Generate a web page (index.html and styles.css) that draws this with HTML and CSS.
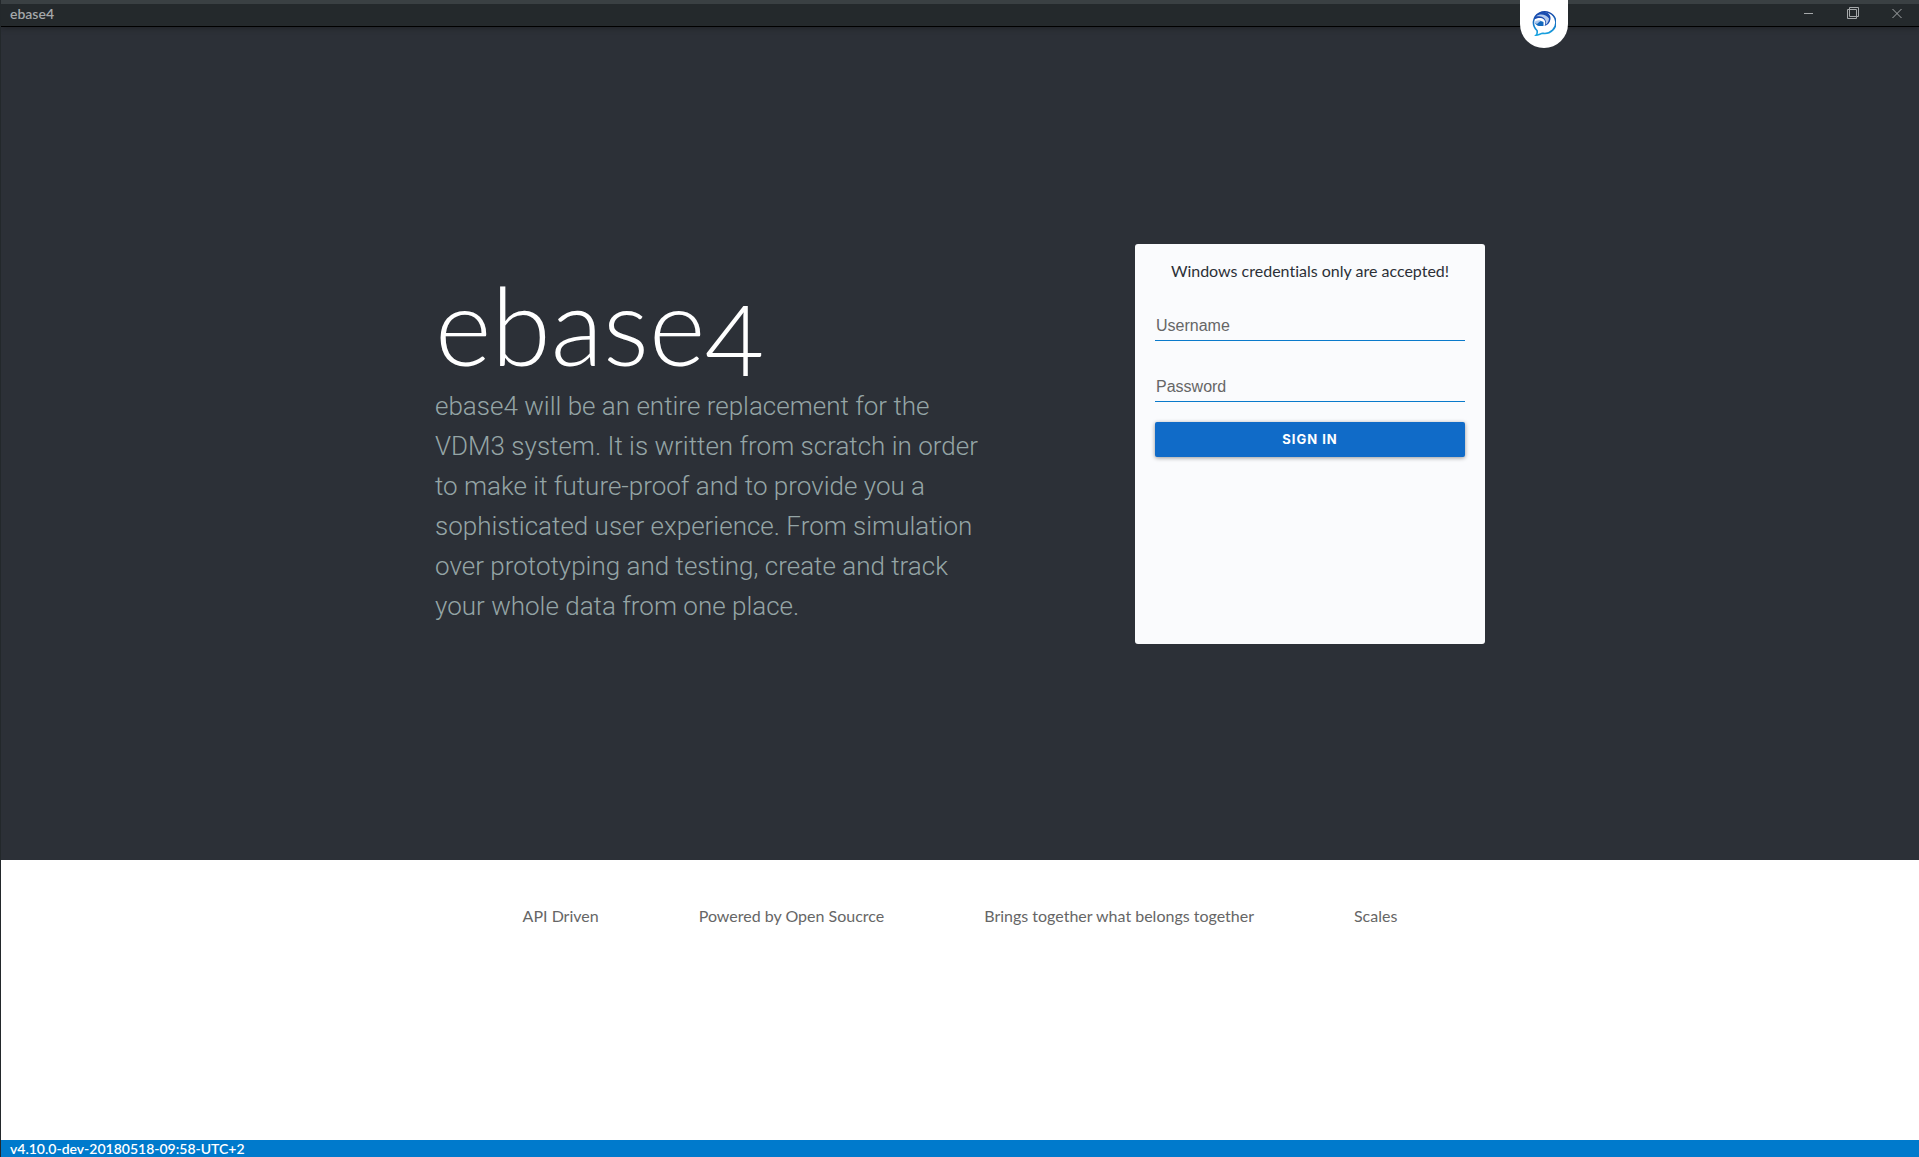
FILE: index.html
```html
<!DOCTYPE html>
<html lang="en">
<head>
  <meta charset="utf-8">
  <title>ebase4</title>
  <link rel="stylesheet" href="styles.css">
</head>
<body>
  <header class="titlebar">
    <span class="titlebar-name">ebase4</span>
    <div class="window-controls">
      <button class="window-button" type="button" aria-label="Minimize">
        <svg width="12" height="12" viewBox="0 0 12 12"><path d="M1 6.5h9"/></svg>
      </button>
      <button class="window-button" type="button" aria-label="Restore">
        <svg width="12" height="12" viewBox="0 0 12 12"><path d="M.5 2.5h9v9h-9zM2.500 .5h9v9h-9z"/></svg>
      </button>
      <button class="window-button" type="button" aria-label="Close">
        <svg width="12" height="12" viewBox="0 0 12 12"><path d="M1.500 2l9 9M10.500 2l-9 9"/></svg>
      </button>
    </div>
    <div class="chat-tab">
      <svg width="24" height="26" viewBox="0 0 24 26">
        <defs>
          <linearGradient id="ring" x1="0" y1="0" x2="0" y2="1">
            <stop offset="0" stop-color="#1443a6"/>
            <stop offset="1" stop-color="#18a6e2"/>
          </linearGradient>
        </defs>
        <path d="M5 20.500A11.200 10.800 0 1 1 11 23.300C8.500 23.700 6.500 25 4 25.200C5.200 24 5.500 22.500 5 20.500Z" fill="#fff" stroke="url(#ring)" stroke-width="1.600"/>
        <path d="M1.800 9.500C3 4.500 7.500 1.800 12.500 2C16.500 2.500 19 5.500 18.500 9C18 12.500 16 15 12.500 16C14.500 12.500 13 8.500 8.500 8C6 7.800 4 8.500 1.800 9.500Z" fill="#1a4db0"/>
        <path d="M4 6.500C8 3 14 4.500 17 8.500C17 11 15.500 13.500 13.800 14.800C15 11 12.500 7 8.500 6.500C6.500 6.200 5 6.300 4 6.500Z" fill="#b4caec"/>
        <path d="M3 13C5 10.500 9 10.300 11.500 12V16H7C5.200 15.800 4 14.800 3 13Z" fill="#1268bd"/>
        <path d="M2 12.500C4 10.300 6.500 9.900 9 10.500L5 14Z" fill="#a9c6ec"/>
      </svg>
    </div>
  </header>
  <main class="page">
    <section class="hero">
      <div class="hero-content">
        <div class="intro">
          <h1 class="intro-title">ebase4</h1>
          <p class="intro-text">ebase4 will be an entire replacement for the VDM3 system. It is written from scratch in order to make it future-proof and to provide you a sophisticated user experience. From simulation over prototyping and testing, create and track your whole data from one place.</p>
        </div>
        <form class="login">
          <p class="login-note">Windows credentials only are accepted!</p>
          <input class="login-field" type="text" placeholder="Username" aria-label="Username">
          <input class="login-field" type="password" placeholder="Password" aria-label="Password">
          <button class="login-submit" type="button">SIGN IN</button>
        </form>
      </div>
    </section>
    <ul class="features">
      <li>API Driven</li>
      <li>Powered by Open Soucrce</li>
      <li>Brings together what belongs together</li>
      <li>Scales</li>
    </ul>
  </main>
  <footer class="statusbar">v4.10.0-dev-20180518-09:58-UTC+2</footer>
</body>
</html>
```

FILE: styles.css
```css
* {
  box-sizing: border-box;
}

body {
  margin: 0;
  min-height: 100vh;
  display: flex;
  flex-direction: column;
  border-left: 1px solid #23282b;
  background: #fff;
  font-family: Lato, sans-serif;
  font-size: 16px;
  font-variant-ligatures: none;
}

.titlebar {
  position: relative;
  z-index: 1;
  display: flex;
  align-items: center;
  justify-content: space-between;
  height: 27px;
  padding: 0 0 2px 9px;
  border-top: 4px solid #3a4043;
  border-bottom: 1px solid #000;
  background: #24292c;
  box-shadow: 0 1px 6px rgba(0, 0, 0, 0.3);
}

.titlebar-name {
  color: #a5a8aa;
  font-size: 14px;
  font-weight: 600;
  line-height: 20px;
}

.window-controls {
  display: flex;
  align-self: stretch;
}

.window-button {
  display: flex;
  align-items: center;
  justify-content: center;
  width: 44px;
  padding: 0 0 2px;
  border: 0;
  background: none;
}

.window-button svg {
  fill: none;
  stroke: #a5a8aa;
  stroke-width: 1;
}

.chat-tab {
  position: absolute;
  top: -4px;
  right: 351px;
  display: flex;
  justify-content: center;
  width: 48px;
  height: 48px;
  padding-top: 10px;
  border-radius: 0 0 24px 24px;
  background: #fff;
}

.page {
  flex: 1;
  display: flex;
  flex-direction: column;
}

.hero {
  min-height: 72vh;
  display: flex;
  align-items: center;
  justify-content: center;
  background: #2c3037;
}

.hero-content {
  display: flex;
  align-items: center;
  justify-content: space-between;
  width: 1050px;
  max-width: 100%;
}

.intro {
  width: 550px;
}

.intro-title {
  margin: 0;
  color: #fff;
  font-size: 108px;
  font-weight: 300;
  line-height: 124px;
  font-feature-settings: "onum";
}

.intro-text {
  margin: 0;
  color: #95a5a6;
  font-family: Roboto, sans-serif;
  font-size: 26px;
  font-weight: 300;
  line-height: 40px;
}

.login {
  display: flex;
  flex-direction: column;
  width: 350px;
  min-height: 400px;
  padding: 15px 20px;
  border-radius: 3px;
  background: #fafbfd;
}

.login-note {
  margin: 0 0 33px;
  color: #2c3037;
  line-height: 24px;
  text-align: center;
}

.login-field {
  width: 100%;
  height: 25px;
  margin-bottom: 36px;
  padding: 0 1px 3px;
  border: 0;
  border-bottom: 1px solid #0a7acb;
  outline: 0;
  background: none;
  color: #2c3037;
  font-family: "Liberation Sans", sans-serif;
  font-size: 16px;
}

.login-field + .login-submit {
  margin-top: -16px;
}

.login-field::placeholder {
  color: #666;
}

.login-submit {
  height: 35px;
  border: 0;
  border-radius: 2px;
  background: #106bc8;
  box-shadow: 0 1px 4px rgba(0, 0, 0, 0.4);
  color: #fff;
  font-family: Inter, sans-serif;
  font-size: 13px;
  font-weight: 700;
  letter-spacing: 1px;
}

.features {
  flex: 1;
  display: flex;
  justify-content: center;
  gap: 100px;
  margin: 0;
  padding: 44px 0 0;
  color: #666;
  line-height: 24px;
  list-style: none;
}

.statusbar {
  padding-left: 9px;
  background: #007acc;
  color: #fff;
  font-size: 14px;
  font-weight: 600;
  line-height: 17px;
}
```
